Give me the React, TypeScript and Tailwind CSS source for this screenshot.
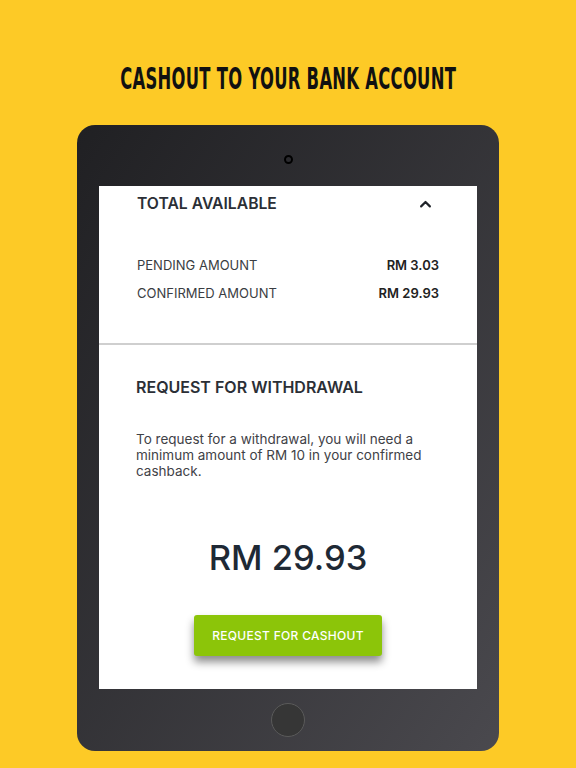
import React from "react";

const ChevronUp: React.FC = () => (
  <svg width="15" height="15" viewBox="0 0 24 24" fill="none" stroke="#1f2329" strokeWidth="3.5" strokeLinecap="round" strokeLinejoin="round">
    <polyline points="5 15 12 8 19 15" />
  </svg>
);

export default function App() {
  return (
    <div className="w-[576px] h-[768px] bg-[#fdca26] flex flex-col items-center overflow-hidden">
      {/* Headline */}
      <div className="h-[125px] pt-[31px] flex items-center justify-center w-full">
        <h1
          className="text-[31px] leading-[36px] font-bold text-[#111] tracking-[0.5px] whitespace-nowrap scale-x-[0.587]"
          style={{ fontFamily: '"Liberation Sans Narrow", "DejaVu Sans Condensed", "Liberation Sans", sans-serif' }}
        >
          CASHOUT TO YOUR BANK ACCOUNT
        </h1>
      </div>

      {/* Tablet frame */}
      <div className="w-[422px] h-[626px] rounded-[18px] bg-gradient-to-br from-[#202023] to-[#4a494e] flex flex-col items-center">
        <div className="h-[61px] pt-[30px] flex justify-center">
          <div className="w-[9px] h-[9px] rounded-full border-2 border-black" />
        </div>

        {/* Screen */}
        <div
          className="w-[378px] h-[503px] bg-white flex flex-col text-[#2b2f36]"
          style={{ fontFamily: 'Inter, "Noto Sans", sans-serif' }}
        >
          <div className="px-[38px] pt-[8px] pb-[41px] border-b-2 border-[#cfcfcf]">
            <div className="flex items-center justify-between">
              <span className="text-[15.7px] leading-[20px] font-semibold">TOTAL AVAILABLE</span>
              <span className="mr-[6px]"><ChevronUp /></span>
            </div>
            <div className="mt-[42px] flex flex-col gap-[10px] text-[13px] leading-[18px] text-[#3a3d42]">
              <div className="flex items-center justify-between">
                <span>PENDING AMOUNT</span>
                <span className="font-semibold text-[#222]">RM 3.03</span>
              </div>
              <div className="flex items-center justify-between">
                <span>CONFIRMED AMOUNT</span>
                <span className="font-semibold text-[#222]">RM 29.93</span>
              </div>
            </div>
          </div>

          <div className="px-[37px] pt-[32px] flex flex-col">
            <span className="text-[16px] leading-[20px] font-semibold">REQUEST FOR WITHDRAWAL</span>
            <p className="mt-[34px] text-[13.5px] leading-[16px] text-[#3f4247]">
              To request for a withdrawal, you will need a minimum amount of RM 10 in your confirmed cashback.
            </p>
            <div className="mt-[59px] text-center text-[34.5px] leading-[40px] font-medium text-[#1e2935]">RM 29.93</div>
            <div className="mt-[37px] flex justify-center">
              <button className="w-[188px] h-[41px] rounded-[3px] bg-[#8cc509] text-white text-[12px] font-medium tracking-[0.3px] shadow-[0_6px_8px_rgba(0,0,0,0.45)]">
                REQUEST FOR CASHOUT
              </button>
            </div>
          </div>
        </div>

        {/* Home button */}
        <div className="flex-1 flex items-center justify-center">
          <div className="w-[34px] h-[34px] rounded-full bg-[#363636] border border-[#5a5a5a]" />
        </div>
      </div>
    </div>
  );
}
